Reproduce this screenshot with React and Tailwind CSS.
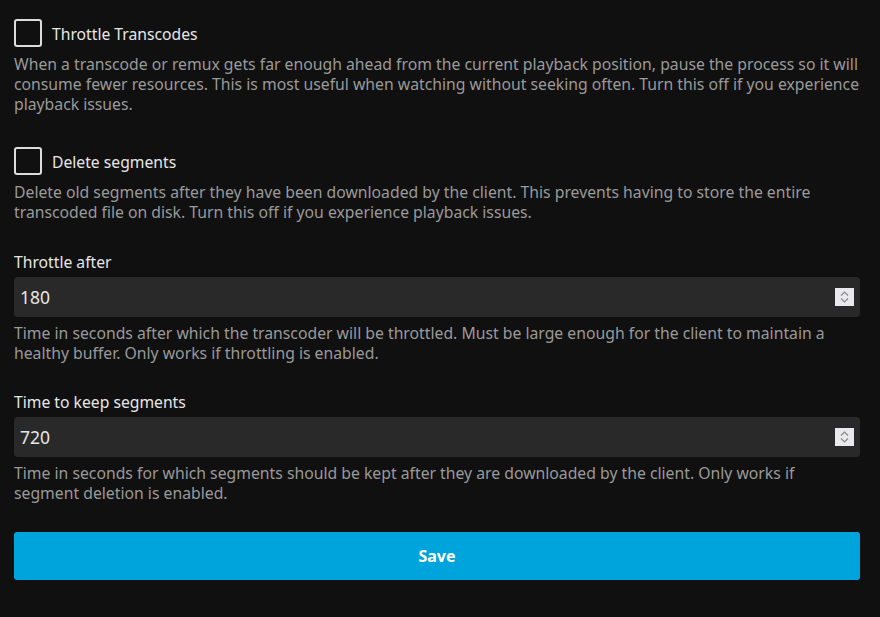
import { useState } from 'react'

function Checkbox({ label, desc }) {
  const [on, setOn] = useState(false)
  return (
    <div>
      <label className="flex items-center gap-[10px] cursor-pointer" onClick={() => setOn(!on)}>
        <span className="w-[28px] h-[28px] border-2 border-[#dddddd] rounded-[3px] shrink-0" />
        <span className="text-[15.7px] text-[#e6e6e6] leading-[24px] pt-[2px]">{label}</span>
      </label>
      <p className="mt-[7px] text-[15.75px] leading-[20px] text-[#9a9a9a]">{desc}</p>
    </div>
  )
}

function Spinner() {
  return (
    <div className="w-[19px] h-[18px] bg-[#e9e9ed] flex flex-col items-center justify-center gap-[2px]">
      <svg width="9" height="5" viewBox="0 0 9 5"><path d="M1 4.5 L4.5 1 L8 4.5" fill="none" stroke="#8a8a8a" strokeWidth="1.2" /></svg>
      <svg width="9" height="5" viewBox="0 0 9 5"><path d="M1 0.5 L4.5 4 L8 0.5" fill="none" stroke="#8a8a8a" strokeWidth="1.2" /></svg>
    </div>
  )
}

function NumberField({ label, value, desc }) {
  return (
    <div>
      <div className="text-[15.7px] leading-[20px] text-[#e6e6e6] mb-[5px]">{label}</div>
      <div className="h-[40px] bg-[#292929] rounded-[4px] flex items-center justify-between pl-[6px] pr-[6px]">
        <span className="text-[17.5px] text-[#e6e6e6]">{value}</span>
        <Spinner />
      </div>
      <p className="mt-[6px] text-[15.75px] leading-[20px] text-[#9a9a9a]">{desc}</p>
    </div>
  )
}

export default function App() {
  return (
    <div className="min-h-[617px] bg-[#101010] pl-[14px] pr-[20px] pt-[19px]" style={{ fontFamily: '"Noto Sans", sans-serif' }}>
      <div className="flex flex-col">
        <Checkbox
          label="Throttle Transcodes"
          desc="When a transcode or remux gets far enough ahead from the current playback position, pause the process so it will consume fewer resources. This is most useful when watching without seeking often. Turn this off if you experience playback issues."
        />
        <div className="mt-[33px]">
          <Checkbox
            label="Delete segments"
            desc="Delete old segments after they have been downloaded by the client. This prevents having to store the entire transcoded file on disk. Turn this off if you experience playback issues."
          />
        </div>
        <div className="mt-[30px]">
          <NumberField
            label="Throttle after"
            value="180"
            desc="Time in seconds after which the transcoder will be throttled. Must be large enough for the client to maintain a healthy buffer. Only works if throttling is enabled."
          />
        </div>
        <div className="mt-[29px]">
          <NumberField
            label="Time to keep segments"
            value="720"
            desc="Time in seconds for which segments should be kept after they are downloaded by the client. Only works if segment deletion is enabled."
          />
        </div>
        <button className="mt-[29px] h-[48px] w-full bg-[#00a4dc] rounded-[3px] text-white font-bold text-[16px]">Save</button>
      </div>
    </div>
  )
}
